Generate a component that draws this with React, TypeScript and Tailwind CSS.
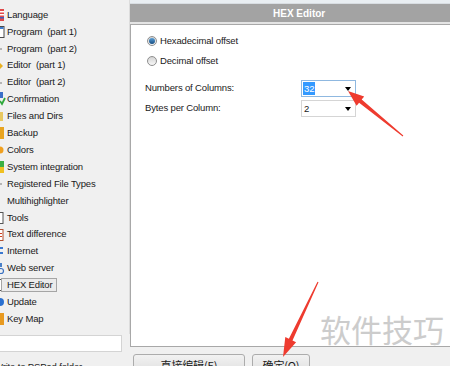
import React from 'react';

type IconKind =
  | 'flag' | 'window' | 'dash' | 'yellow' | 'check' | 'folder' | 'backup' | 'dot'
  | 'sys' | 'none' | 'doc' | 'globe' | 'web' | 'box' | 'update' | 'key';

interface NavItem {
  label: string;
  icon: IconKind;
  selected?: boolean;
}

const items: NavItem[] = [
  { label: 'Language', icon: 'flag' },
  { label: 'Program  (part 1)', icon: 'window' },
  { label: 'Program  (part 2)', icon: 'dash' },
  { label: 'Editor  (part 1)', icon: 'yellow' },
  { label: 'Editor  (part 2)', icon: 'dash' },
  { label: 'Confirmation', icon: 'check' },
  { label: 'Files and Dirs', icon: 'folder' },
  { label: 'Backup', icon: 'backup' },
  { label: 'Colors', icon: 'dot' },
  { label: 'System integration', icon: 'sys' },
  { label: 'Registered File Types', icon: 'dash' },
  { label: 'Multihighlighter', icon: 'none' },
  { label: 'Tools', icon: 'box' },
  { label: 'Text difference', icon: 'doc' },
  { label: 'Internet', icon: 'globe' },
  { label: 'Web server', icon: 'web' },
  { label: 'HEX Editor', icon: 'box', selected: true },
  { label: 'Update', icon: 'update' },
  { label: 'Key Map', icon: 'key' },
];

// only the right edge of each 16px icon is on screen
const TreeIcon: React.FC<{ kind: IconKind }> = ({ kind }) => (
  <svg width="6" height="16" viewBox="0 0 6 16" className="shrink-0">
    {kind === 'flag' && (
      <>
        <rect x="0" y="2" width="4" height="12" fill="#e04848" />
        <rect x="0" y="4" width="4" height="1.5" fill="#ffffff" />
        <rect x="0" y="7" width="4" height="1.5" fill="#ffffff" />
        <rect x="0" y="10" width="4" height="1.5" fill="#3a5fc0" />
      </>
    )}
    {kind === 'window' && (
      <>
        <rect x="-2" y="2.5" width="6" height="11" fill="#ffffff" stroke="#4a4a4a" />
        <rect x="-2" y="3" width="5.5" height="2" fill="#3f7fd0" />
      </>
    )}
    {kind === 'dash' && <rect x="0" y="7.5" width="2" height="1" fill="#7a7a7a" />}
    {kind === 'yellow' && <path d="M0 5 L3 8 L0 11 Z" fill="#e8b020" />}
    {kind === 'check' && (
      <>
        <rect x="0" y="1" width="3" height="6" fill="#3a6fc8" />
        <path d="M0 10 L2 13 L5 7" stroke="#2fa83a" strokeWidth="1.8" fill="none" />
      </>
    )}
    {kind === 'folder' && <rect x="0" y="4" width="3" height="9" fill="#e8c860" />}
    {kind === 'backup' && <rect x="0" y="2" width="4" height="12" fill="#e8a420" />}
    {kind === 'dot' && <circle cx="0" cy="8" r="3.5" fill="#f0a020" />}
    {kind === 'sys' && (
      <>
        <rect x="0" y="2" width="4" height="6" fill="#3cb043" />
        <rect x="0" y="8" width="4" height="6" fill="#f0c020" />
      </>
    )}
    {kind === 'box' && <rect x="-2" y="2.5" width="5" height="11" fill="#ffffff" stroke="#555555" />}
    {kind === 'doc' && (
      <>
        <rect x="-2" y="2.5" width="5" height="11" fill="#ffffff" stroke="#b05030" />
        <rect x="0" y="6" width="2" height="1" fill="#d04020" />
        <rect x="0" y="9" width="2" height="1" fill="#d04020" />
      </>
    )}
    {kind === 'globe' && (
      <>
        <rect x="0" y="4" width="3" height="2" fill="#3a78d0" />
        <rect x="0" y="9" width="3" height="2" fill="#3a78d0" />
      </>
    )}
    {kind === 'web' && (
      <>
        <rect x="0" y="3" width="2" height="4" fill="#4a80c8" />
        <circle cx="1" cy="11" r="2.5" fill="none" stroke="#3a70c0" strokeWidth="1.2" />
      </>
    )}
    {kind === 'update' && <circle cx="0" cy="8" r="4" fill="#2a70d0" />}
    {kind === 'key' && <rect x="0" y="2" width="4" height="12" fill="#e89a20" />}
  </svg>
);

const Radio: React.FC<{ checked?: boolean; label: string }> = ({ checked, label }) => (
  <div className="flex items-center h-[20px]">
    <span className="ml-[2px] w-[10px] h-[10px] rounded-full border border-[#8f8f8f] bg-gradient-to-b from-[#d4d4d4] to-[#f8f8f8] flex items-center justify-center">
      {checked && <span className="w-[6px] h-[6px] rounded-full bg-gradient-to-b from-[#5aa0d8] to-[#174e82]" />}
    </span>
    <span className="ml-[3px]">{label}</span>
  </div>
);

const Select: React.FC<{ value: string; focused?: boolean }> = ({ value, focused }) => (
  <div
    className={
      focused
        ? 'w-[55px] h-[17px] border border-[#8fb8e0] bg-white flex items-center pl-[1px] pr-[4px]'
        : 'w-[55px] h-[17px] border border-[#d5d5d5] bg-white flex items-center pl-[1px] pr-[4px]'
    }
  >
    <span className={focused ? 'px-[1px] bg-[#3399ff] text-white leading-[13px]' : 'px-[1px] leading-[13px]'}>{value}</span>
    <span className="ml-auto w-0 h-0 border-l-[3.5px] border-r-[3.5px] border-t-[4px] border-l-transparent border-r-transparent border-t-black" />
  </div>
);

const Arrow: React.FC<{ points: string }> = ({ points }) => <polygon points={points} fill="#ee3b2f" />;

export default function App() {
  return (
    <div
      className="relative w-[450px] h-[366px] overflow-hidden bg-[#f0f0f0] text-[9.5px] tracking-[-0.15px] text-[#1a1a1a] flex"
      style={{ fontFamily: '"Liberation Sans", Arial, sans-serif' }}
    >
      {/* left tree */}
      <div className="w-[130px] shrink-0 flex flex-col">
        <div className="shrink-0 pt-[6.5px] border-r border-[#dcdcdc] h-[334px]">
          {items.map((it) => (
            <div key={it.label} className="h-[16.9px] flex items-center whitespace-pre">
              <TreeIcon kind={it.icon} />
              {it.selected ? (
                <span className="-ml-[5px] pl-[5px] pr-[3px] h-[14px] flex items-center border border-[#a5a5a5] bg-[#ebebeb]">
                  {it.label}
                </span>
              ) : (
                <span className="ml-[1px]">{it.label}</span>
              )}
            </div>
          ))}
        </div>
        <div className="shrink-0 mt-[1px] -ml-[2px] w-[124px] h-[17px] bg-white border border-[#d4d4d4]" />
        <div className="shrink-0 mt-[9px] -ml-[6px] whitespace-nowrap leading-[12px]">Write to PSPad folder</div>
      </div>

      {/* right page */}
      <div className="flex-1 flex flex-col">
        <div className="shrink-0 h-[4px] bg-[#e9eef2] border-b border-[#d8dde2]" />
        <div className="shrink-0 h-[18px] bg-[#a3a3a3] pl-[143px] flex items-center text-white font-bold text-[10px] tracking-normal">
          HEX Editor
        </div>
        <div className="shrink-0 h-[2px] bg-[#e4e4e4]" />
        <div className="shrink-0 h-[323px] bg-white border-t border-l border-b border-[#a8a8a8] pl-[14px] pt-[6px]">
          <Radio checked label="Hexadecimal offset" />
          <Radio label="Decimal offset" />
          <div className="mt-[9px] flex items-center h-[17px]">
            <span className="w-[156px]">Numbers of Columns:</span>
            <Select value="32" focused />
          </div>
          <div className="mt-[3px] flex items-center h-[17px]">
            <span className="w-[156px]">Bytes per Column:</span>
            <Select value="2" />
          </div>
        </div>
        <div
          className="shrink-0 mt-[7px] ml-[3px] flex gap-[7px] text-[11px]"
          style={{ fontFamily: '"Noto Sans CJK SC", "Liberation Sans", sans-serif' }}
        >
          <div className="w-[112px] h-[23px] rounded-[3px] border border-[#acacac] bg-gradient-to-b from-[#f2f2f2] to-[#dcdcdc] flex justify-center pt-[3px] leading-[14px]">
            直接编辑(E)
          </div>
          <div className="w-[58px] h-[23px] rounded-[3px] border border-[#acacac] bg-gradient-to-b from-[#f2f2f2] to-[#dcdcdc] flex justify-center pt-[3px] leading-[14px]">
            确定(O)
          </div>
        </div>
      </div>

      {/* watermark */}
      <div
        className="absolute left-[320px] top-[307px] text-[31px] leading-[44px] text-[#cccccc] tracking-normal"
        style={{ fontFamily: '"Noto Sans CJK SC", sans-serif' }}
      >
        软件技巧
      </div>

      {/* annotation arrows */}
      <svg className="absolute inset-0 pointer-events-none" width="450" height="366" viewBox="0 0 450 366">
        <Arrow points="403.3,135.6 361.7,99.5 364.2,96.5 348,91 356.6,105.8 359.1,102.7 402.7,136.4" />
        <Arrow points="318.5,282.3 292.5,340.6 296.1,342.3 283,357 285.3,337.1 288.9,338.8 317.5,281.7" />
      </svg>
    </div>
  );
}
